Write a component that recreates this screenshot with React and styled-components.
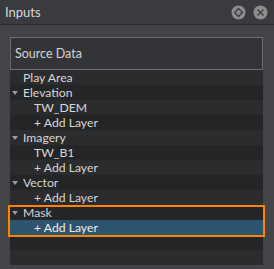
import React from "react";
import styled, { createGlobalStyle } from "styled-components";

const GlobalStyle = createGlobalStyle`
  html, body {
    margin: 0;
    padding: 0;
    background: #434447;
    overflow: hidden;
  }
`;

const Panel = styled.div`
  width: 274px;
  height: 269px;
  display: flex;
  flex-direction: column;
  background: #434447;
  font-family: Lato, "Liberation Sans", sans-serif;
  color: #d6d6d6;
  overflow: hidden;
`;

const TitleBar = styled.div`
  height: 24px;
  flex: none;
  display: flex;
  align-items: center;
  justify-content: space-between;
  padding: 0 5px;
  background: #3a3b3e;
  border-bottom: 1px solid #2c2d2f;

  h1 {
    margin: 0;
    font-size: 13px;
    font-weight: normal;
    color: #d8d8d8;
  }
`;

const TitleButtons = styled.div`
  display: flex;
  align-items: center;
  gap: 7px;
  margin-right: 1px;
  margin-top: 1px;
`;

const Body = styled.div`
  flex: 1;
  padding: 12px 11px 0 10px;
  display: flex;
  flex-direction: column;
`;

const HeaderBox = styled.div`
  height: 31px;
  flex: none;
  display: flex;
  align-items: center;
  padding-left: 4px;
  background: #333437;
  border: 1px solid #6b6c6e;
  font-size: 12.5px;
  color: #d4d4d4;
`;

const List = styled.div`
  display: flex;
  flex-direction: column;
`;

const Row = styled.div`
  height: 15px;
  display: flex;
  align-items: center;
  padding-left: ${p => 2 + p.depth * 11}px;
  font-size: 12.2px;
  line-height: 15px;
  white-space: nowrap;
  background: ${p => (p.selected ? "#2c546f" : p.odd ? "#242527" : "#2b2c2e")};
  color: ${p => (p.selected ? "#eeeeee" : "#d6d6d6")};
`;

const CaretSlot = styled.span`
  width: 11px;
  flex: none;
  display: flex;
  align-items: center;
`;

const Caret = styled.span`
  width: 0;
  height: 0;
  border-left: 3px solid transparent;
  border-right: 3px solid transparent;
  border-top: 4px solid #9c9c9c;
  margin-top: 1px;
`;

const Highlight = styled.div`
  position: relative;
  display: flex;
  flex-direction: column;

  &::after {
    content: "";
    position: absolute;
    top: 0;
    left: -2px;
    right: -2px;
    bottom: -2px;
    border: 2px solid #ff8200;
    pointer-events: none;
  }
`;

function RoundButton({ children }) {
  return (
    <svg width="15" height="15" viewBox="0 0 15 15">
      <circle cx="7.5" cy="7.5" r="7" fill="#8e8e8e" />
      {children}
    </svg>
  );
}

function TreeRow({ index, depth, caret, label, selected }) {
  return (
    <Row depth={depth} odd={index % 2 === 1} selected={selected}>
      <CaretSlot>{caret && <Caret />}</CaretSlot>
      {label}
    </Row>
  );
}

const items = [
  { depth: 0, label: "Play Area" },
  { depth: 0, caret: true, label: "Elevation" },
  { depth: 1, label: "TW_DEM" },
  { depth: 1, label: "+ Add Layer" },
  { depth: 0, caret: true, label: "Imagery" },
  { depth: 1, label: "TW_B1" },
  { depth: 1, label: "+ Add Layer" },
  { depth: 0, caret: true, label: "Vector" },
  { depth: 1, label: "+ Add Layer" },
];

export default function App() {
  return (
    <>
      <GlobalStyle />
      <Panel>
        <TitleBar>
          <h1>Inputs</h1>
          <TitleButtons>
            <RoundButton>
              <path
                d="M7.5 3.6 L11.4 7.5 L7.5 11.4 L3.6 7.5 Z"
                fill="none"
                stroke="#3d3e41"
                strokeWidth="1.4"
              />
            </RoundButton>
            <RoundButton>
              <path
                d="M4.5 4.5 L10.5 10.5 M10.5 4.5 L4.5 10.5"
                stroke="#3d3e41"
                strokeWidth="1.4"
              />
            </RoundButton>
          </TitleButtons>
        </TitleBar>
        <Body>
          <HeaderBox>Source Data</HeaderBox>
          <List>
            {items.map((it, i) => (
              <TreeRow key={i} index={i} {...it} />
            ))}
            <Highlight>
              <TreeRow index={9} depth={0} caret label="Mask" />
              <TreeRow index={10} depth={1} label="+ Add Layer" selected />
            </Highlight>
            <TreeRow index={11} depth={0} label="" />
            <TreeRow index={12} depth={0} label="" />
          </List>
        </Body>
      </Panel>
    </>
  );
}
